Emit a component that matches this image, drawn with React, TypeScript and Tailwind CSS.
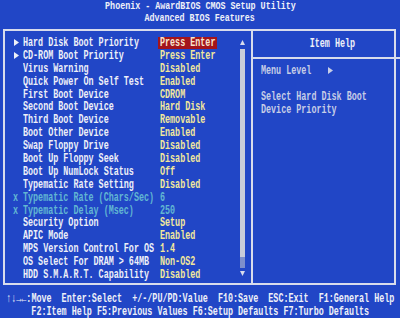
import React from "react";

const T = ({ children, className = "" }: { children: React.ReactNode; className?: string }) => (
  <span className={"inline-block origin-left scale-x-[0.7] whitespace-pre leading-none " + className}>{children}</span>
);

const Arrow = ({ className = "" }: { className?: string }) => (
  <svg width="5" height="7" viewBox="0 0 5 7" className={className}>
    <polygon points="0,0 5,3.5 0,7" fill="currentColor" />
  </svg>
);

type Row = { label: string; value: string; sub?: boolean; off?: boolean; sel?: boolean };

const rows: Row[] = [
  { label: "Hard Disk Boot Priority", value: "Press Enter", sub: true, sel: true },
  { label: "CD-ROM Boot Priority", value: "Press Enter", sub: true },
  { label: "Virus Warning", value: "Disabled" },
  { label: "Quick Power On Self Test", value: "Enabled" },
  { label: "First Boot Device", value: "CDROM" },
  { label: "Second Boot Device", value: "Hard Disk" },
  { label: "Third Boot Device", value: "Removable" },
  { label: "Boot Other Device", value: "Enabled" },
  { label: "Swap Floppy Drive", value: "Disabled" },
  { label: "Boot Up Floppy Seek", value: "Disabled" },
  { label: "Boot Up NumLock Status", value: "Off" },
  { label: "Typematic Rate Setting", value: "Disabled" },
  { label: "Typematic Rate (Chars/Sec)", value: "6", off: true },
  { label: "Typematic Delay (Msec)", value: "250", off: true },
  { label: "Security Option", value: "Setup" },
  { label: "APIC Mode", value: "Enabled" },
  { label: "MPS Version Control For OS", value: "1.4" },
  { label: "OS Select For DRAM > 64MB", value: "Non-OS2" },
  { label: "HDD S.M.A.R.T. Capability", value: "Disabled" },
];

export default function App() {
  return (
    <div className="w-[400px] h-[318px] overflow-hidden bg-[#2146c6] font-['Liberation_Mono',monospace] font-bold text-[12px] text-[#eef0f8] flex flex-col">
      <header className="h-[29px] flex flex-col items-center text-[11px]">
        <div className="h-[12.5px] flex items-center">
          <span className="inline-block origin-center scale-x-[0.76] whitespace-pre leading-none">Phoenix - AwardBIOS CMOS Setup Utility</span>
        </div>
        <div className="h-[12.5px] flex items-center">
          <span className="inline-block origin-center scale-x-[0.76] whitespace-pre leading-none">Advanced BIOS Features</span>
        </div>
      </header>

      <main className="ml-[3px] mr-[4px] h-[256px] border-2 border-[#d8dcec] flex">
        <section className="w-[265px] flex">
          <div className="flex-1 pt-[5.5px]">
            {rows.map((r) => (
              <div key={r.label} className="h-[12.9px] flex items-center">
                <div className="w-[18px] pl-[9px] flex items-center">
                  {r.sub && <Arrow className="text-[#eef0f8]" />}
                  {r.off && <T className="text-[#62b6d2] -ml-px">x</T>}
                </div>
                <div className="w-[135px] flex items-center">
                  <T className={r.off ? "text-[#62b6d2]" : "text-[#eef0f8]"}>{r.label}</T>
                </div>
                {r.sel ? (
                  <div className="w-[59px] h-[12px] pl-[2px] bg-[#a3141c] flex items-center">
                    <T className="text-[#f8e6cf]">{r.value}</T>
                  </div>
                ) : (
                  <div className="pl-[2px] flex items-center">
                    <T className={r.off ? "text-[#62b6d2]" : "text-[#f2e89c]"}>{r.value}</T>
                  </div>
                )}
              </div>
            ))}
          </div>
          <div className="w-[6px] mr-[6px] flex flex-col items-center pt-[9px]">
            <svg width="5" height="5" viewBox="0 0 5 5">
              <polygon points="2.5,0 5,5 0,5" fill="#d8dcec" />
            </svg>
            <div className="w-[5px] h-[208px] mt-[4px] bg-[#c9cdd9]" />
            <div className="w-[5px] h-[11px] bg-[#7d8fcc]" />
            <svg width="5" height="5" viewBox="0 0 5 5" className="mt-[3px]">
              <polygon points="0,0 5,0 2.5,5" fill="#d8dcec" />
            </svg>
          </div>
        </section>

        <aside className="flex-1 border-l-2 border-[#d8dcec] flex flex-col">
          <div className="h-[28px] border-b-2 border-[#d8dcec] flex items-center justify-center">
            <span className="inline-block origin-center scale-x-[0.7] whitespace-pre leading-none text-[#eef0f8]">Item Help</span>
          </div>
          <div className="pl-[8px] pt-[5.5px] text-[#c6cde6]">
            <div className="h-[12.9px] flex items-center">
              <div className="w-[67px] flex items-center">
                <T>Menu Level</T>
              </div>
              <Arrow className="text-[#c6cde6]" />
            </div>
            <div className="h-[12.9px]" />
            <div className="h-[12.9px] flex items-center">
              <T>Select Hard Disk Boot</T>
            </div>
            <div className="h-[12.9px] flex items-center">
              <T>Device Priority</T>
            </div>
          </div>
        </aside>
      </main>

      <footer className="pt-[7px] flex flex-col items-center text-[#eef0f8]">
        <div className="h-[13px] flex items-center">
          <span className="inline-block origin-center scale-x-[0.7] whitespace-pre leading-none">↑↓→←:Move  Enter:Select  +/-/PU/PD:Value  F10:Save  ESC:Exit  F1:General Help</span>
        </div>
        <div className="h-[13px] flex items-center">
          <span className="inline-block origin-center scale-x-[0.7] whitespace-pre leading-none">F2:Item Help F5:Previous Values F6:Setup Defaults F7:Turbo Defaults</span>
        </div>
      </footer>
    </div>
  );
}
